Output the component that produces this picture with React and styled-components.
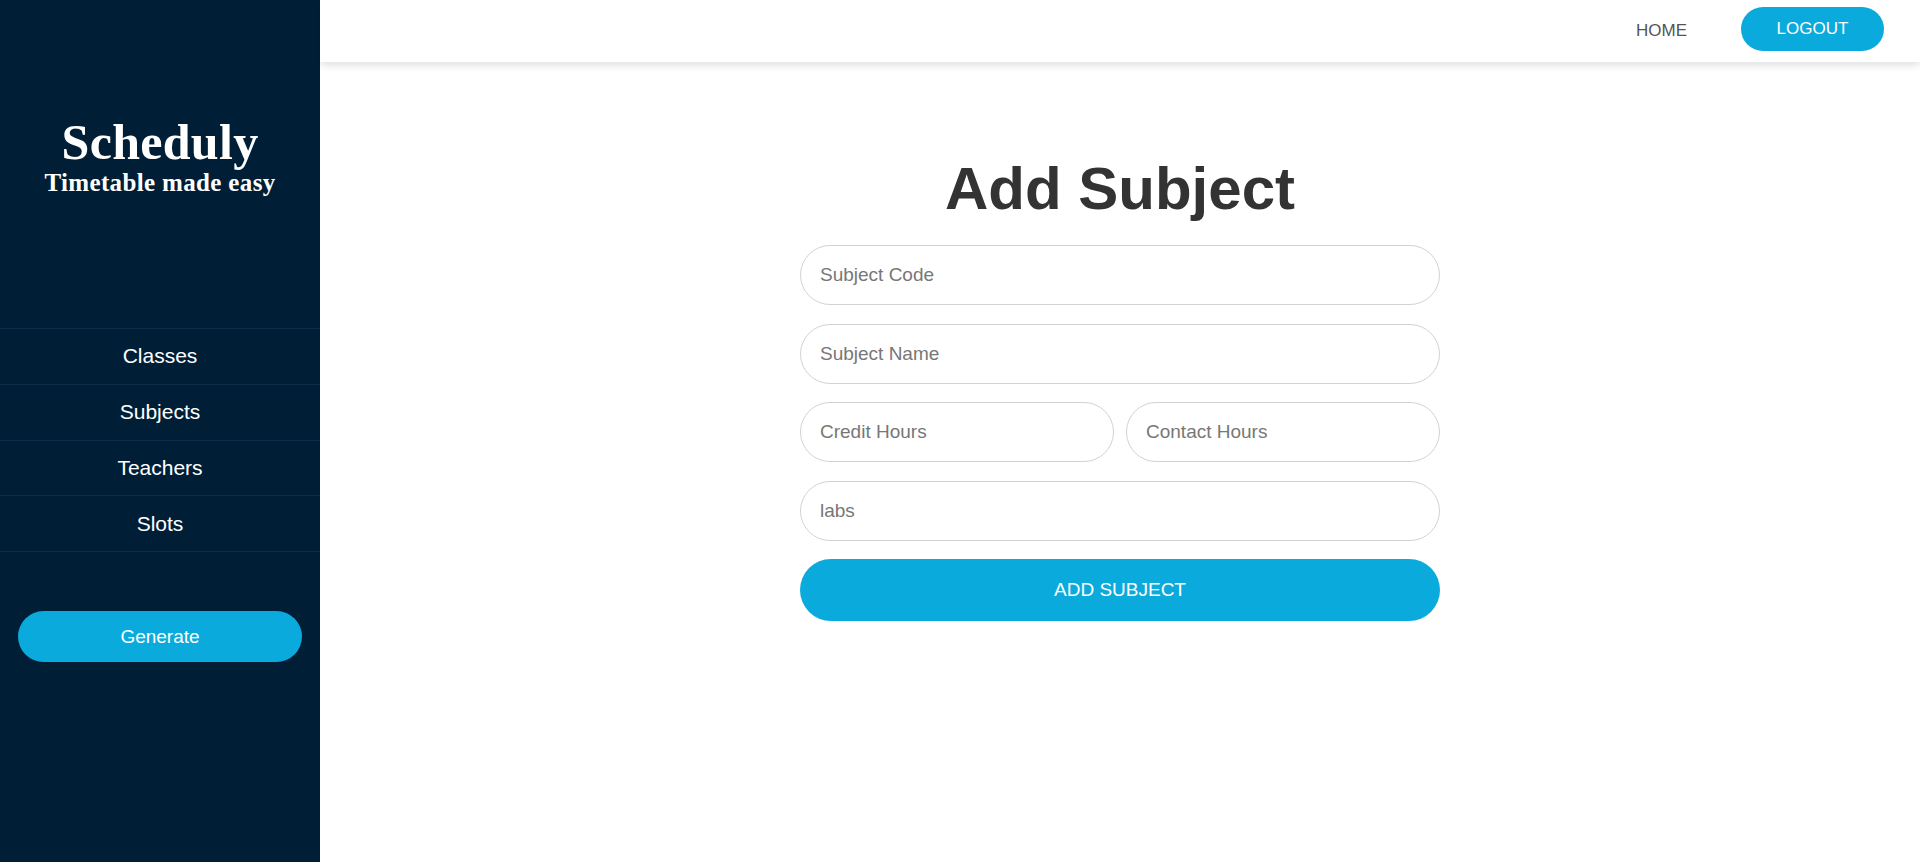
import React from "react";
import styled, { createGlobalStyle } from "styled-components";

const GlobalStyle = createGlobalStyle`
  html, body {
    margin: 0;
    padding: 0;
    height: 100%;
    background: #ffffff;
  }
  body {
    font-family: "Liberation Sans", Arial, sans-serif;
  }
  * { box-sizing: border-box; }
`;

const Layout = styled.div`
  display: flex;
  min-height: 100vh;
  width: 100%;
`;

const Sidebar = styled.aside`
  width: 320px;
  flex-shrink: 0;
  background: #001f37;
  display: flex;
  flex-direction: column;
  padding-top: 117px;
`;

const Brand = styled.div`
  display: flex;
  flex-direction: column;
  align-items: center;
  color: #ffffff;
  font-family: "Liberation Serif", "Times New Roman", serif;
  font-weight: 700;
`;

const BrandName = styled.div`
  font-size: 50px;
  line-height: 50px;
  letter-spacing: 0.3px;
`;

const Tagline = styled.div`
  font-size: 25px;
  line-height: 29px;
  letter-spacing: 0.35px;
  padding-top: 1px;
`;

const Nav = styled.nav`
  margin-top: 131px;
  display: flex;
  flex-direction: column;
  border-top: 1px solid #0d2c46;
`;

const NavItem = styled.a`
  display: flex;
  align-items: center;
  justify-content: center;
  height: 55.8px;
  border-bottom: 1px solid #0d2c46;
  color: #ffffff;
  font-size: 21px;
  text-decoration: none;
  cursor: pointer;
`;

const GenerateButton = styled.button`
  margin: 59px 18px 0;
  height: 51px;
  border: none;
  border-radius: 26px;
  background: #0aabdc;
  color: #ffffff;
  font-family: "Liberation Sans", Arial, sans-serif;
  font-size: 19px;
  cursor: pointer;
`;

const Main = styled.div`
  flex: 1;
  display: flex;
  flex-direction: column;
  min-width: 0;
`;

const Header = styled.header`
  height: 62px;
  display: flex;
  align-items: center;
  justify-content: flex-end;
  gap: 54px;
  padding-right: 36px;
  background: #ffffff;
  box-shadow: 0 3px 8px rgba(0, 0, 0, 0.13);
  position: relative;
  z-index: 1;
`;

const HeaderLink = styled.a`
  color: #555555;
  font-size: 17px;
  text-decoration: none;
  cursor: pointer;
`;

const LogoutButton = styled.button`
  height: 44px;
  width: 143px;
  margin-top: -4px;
  border: none;
  border-radius: 22px;
  background: #0aabdc;
  color: #ffffff;
  font-family: "Liberation Sans", Arial, sans-serif;
  font-size: 17px;
  cursor: pointer;
`;

const Content = styled.main`
  display: flex;
  flex-direction: column;
  align-items: center;
  padding-top: 92px;
`;

const Title = styled.h1`
  margin: 0;
  font-size: 60px;
  line-height: 69px;
  font-weight: 700;
  color: #333333;
`;

const Form = styled.form`
  width: 640px;
  margin-top: 22px;
  display: flex;
  flex-direction: column;
  gap: 18.6px;
`;

const Row = styled.div`
  display: flex;
  gap: 12px;
`;

const Input = styled.input`
  width: 100%;
  height: 60px;
  padding: 0 19px;
  border: 1px solid #d2d2d2;
  border-radius: 30px;
  background: #ffffff;
  font-family: "Liberation Sans", Arial, sans-serif;
  font-size: 19px;
  color: #333;
  outline: none;
  &::placeholder {
    color: #777777;
  }
`;

const SubmitButton = styled.button`
  height: 62px;
  border: none;
  border-radius: 31px;
  background: #0aabdc;
  color: #ffffff;
  font-family: "Liberation Sans", Arial, sans-serif;
  font-size: 19px;
  cursor: pointer;
`;

const navItems = ["Classes", "Subjects", "Teachers", "Slots"];

export default function App() {
  return (
    <>
      <GlobalStyle />
      <Layout>
        <Sidebar>
          <Brand>
            <BrandName>Scheduly</BrandName>
            <Tagline>Timetable made easy</Tagline>
          </Brand>
          <Nav>
            {navItems.map((item) => (
              <NavItem key={item}>{item}</NavItem>
            ))}
          </Nav>
          <GenerateButton type="button">Generate</GenerateButton>
        </Sidebar>
        <Main>
          <Header>
            <HeaderLink>HOME</HeaderLink>
            <LogoutButton type="button">LOGOUT</LogoutButton>
          </Header>
          <Content>
            <Title>Add Subject</Title>
            <Form onSubmit={(e) => e.preventDefault()}>
              <Input placeholder="Subject Code" />
              <Input placeholder="Subject Name" />
              <Row>
                <Input placeholder="Credit Hours" />
                <Input placeholder="Contact Hours" />
              </Row>
              <Input placeholder="labs" />
              <SubmitButton type="submit">ADD SUBJECT</SubmitButton>
            </Form>
          </Content>
        </Main>
      </Layout>
    </>
  );
}
